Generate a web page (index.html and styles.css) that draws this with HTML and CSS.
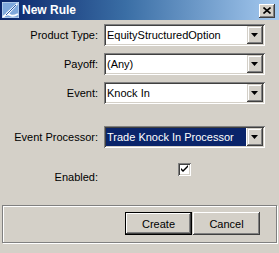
FILE: index.html
```html
<!DOCTYPE html>
<html>
<head lang="en">
    <meta charset="UTF-8">
    <title>New Rule</title>
    <link rel="stylesheet" href="styles.css">
</head>
<body>
<div class="dialog">
    <div class="titlebar">
        <svg class="title-icon" width="17" height="16" viewBox="0 0 17 16">
            <rect x="0" y="0" width="17" height="16" fill="#7fa8dc"/>
            <rect x="0" y="0" width="17" height="16" fill="none" stroke="#dce8f6" stroke-width="1"/>
            <polygon points="15,1 16,2 6,13 3,14 4,11" fill="#ffffff"/>
            <path d="M1 15 Q5 11 8 13 T16 12" fill="none" stroke="#ffffff" stroke-width="2"/>
            <line x1="4" y1="13" x2="14" y2="3" stroke="#2a5aa8" stroke-width="1"/>
        </svg>
        <span class="title-text">New Rule</span>
        <span class="close-btn">
            <svg width="8" height="7" viewBox="0 0 8 7">
                <path d="M0.5 0.5 L7.5 6.5 M7.5 0.5 L0.5 6.5" stroke="#000" stroke-width="1.6"/>
            </svg>
        </span>
    </div>
    <div class="form">
        <div class="form-row">
            <label class="form-label">Product Type:</label>
            <div class="combo"><span class="combo-text">EquityStructuredOption</span><span class="combo-arrow"></span></div>
        </div>
        <div class="form-row">
            <label class="form-label">Payoff:</label>
            <div class="combo"><span class="combo-text">(Any)</span><span class="combo-arrow"></span></div>
        </div>
        <div class="form-row">
            <label class="form-label">Event:</label>
            <div class="combo"><span class="combo-text">Knock In</span><span class="combo-arrow"></span></div>
        </div>
        <div class="form-row form-row-gap">
            <label class="form-label">Event Processor:</label>
            <div class="combo"><span class="combo-text combo-selected">Trade Knock In Processor</span><span class="combo-arrow"></span></div>
        </div>
        <div class="form-row form-row-check">
            <label class="form-label">Enabled:</label>
            <div class="check-cell">
                <span class="checkbox">
                    <svg width="9" height="9" viewBox="0 0 9 9">
                        <path d="M1 3 L1 5 L3 7 L8 2 L8 0 L3 5 Z" fill="#000"/>
                    </svg>
                </span>
            </div>
        </div>
    </div>
    <div class="button-panel">
        <button class="btn btn-default">Create</button>
        <button class="btn">Cancel</button>
    </div>
</div>
</body>
</html>
```

FILE: styles.css
```css
body {
    margin: 0px;
    padding: 0px;
    font-family: "Liberation Sans", Arial, sans-serif;
    font-size: 11px;
    color: #000000;
}
.dialog {
    width: 279px;
    height: 253px;
    background: #d4d0c8;
    overflow: hidden;
}
.titlebar {
    height: 20px;
    display: flex;
    align-items: center;
    padding-left: 2px;
    background: linear-gradient(to right, #0a246a 0%, #3a6ea5 45%, #a6caf0 100%);
}
.title-icon {
    display: block;
    margin-right: 3px;
}
.title-text {
    flex: 1;
    color: #ffffff;
    font-weight: bold;
    font-size: 12px;
}
.close-btn {
    width: 16px;
    height: 14px;
    margin-right: 4px;
    margin-top: 1px;
    display: flex;
    align-items: center;
    justify-content: center;
    background: #d4d0c8;
    box-shadow: inset -1px -1px #404040, inset 1px 1px #ffffff, inset -2px -2px #808080;
}
.close-btn svg {
    display: block;
}
.form {
    padding-top: 4px;
}
.form-row {
    display: flex;
    align-items: center;
    height: 22px;
    margin-bottom: 7px;
}
.form-row-gap {
    margin-top: 22px;
    margin-bottom: 15px;
}
.form-row-check {
    height: 26px;
    align-items: flex-end;
}
.form-label {
    width: 98px;
    margin-right: 6px;
    text-align: right;
    white-space: nowrap;
}
.form-row-check .form-label {
    padding-bottom: 6px;
}
.combo {
    width: 161px;
    height: 22px;
    box-sizing: border-box;
    padding: 2px;
    display: flex;
    background: #ffffff;
    box-shadow: inset 1px 1px #808080, inset -1px -1px #ffffff, inset 2px 2px #404040, inset -2px -2px #d4d0c8;
}
.combo-text {
    flex: 1;
    line-height: 18px;
    padding-left: 1px;
    white-space: nowrap;
    overflow: hidden;
}
.combo-selected {
    background: #0a246a;
    color: #ffffff;
    margin-right: 1px;
}
.combo-arrow {
    width: 16px;
    height: 18px;
    position: relative;
    background: #d4d0c8;
    box-shadow: inset -1px -1px #404040, inset 1px 1px #d4d0c8, inset -2px -2px #808080, inset 2px 2px #ffffff;
}
.combo-arrow:after {
    content: "";
    position: absolute;
    left: 4px;
    top: 7px;
    width: 7px;
    height: 4px;
    background: #000000;
    clip-path: polygon(0 0, 100% 0, 50% 100%);
}
.check-cell {
    width: 161px;
    height: 26px;
    display: flex;
    justify-content: center;
    align-items: flex-start;
}
.checkbox {
    width: 13px;
    height: 13px;
    display: flex;
    align-items: center;
    justify-content: center;
    background: #ffffff;
    box-shadow: inset 1px 1px #808080, inset -1px -1px #ffffff, inset 2px 2px #404040, inset -2px -2px #d4d0c8;
}
.checkbox svg {
    display: block;
}
.button-panel {
    margin: 16px 2px 0px 2px;
    height: 38px;
    border: 1px solid #808080;
    box-shadow: inset 1px 1px #ffffff, 1px 1px #ffffff;
    display: flex;
    justify-content: flex-end;
    align-items: flex-start;
    padding: 6px 16px 0px 0px;
    box-sizing: border-box;
    gap: 1px;
}
.btn {
    width: 67px;
    height: 23px;
    border: none;
    padding: 0px;
    font-family: "Liberation Sans", Arial, sans-serif;
    font-size: 11px;
    color: #000000;
    background: #d4d0c8;
    box-shadow: inset -1px -1px #404040, inset 1px 1px #ffffff, inset -2px -2px #808080, inset 2px 2px #d4d0c8;
}
.btn-default {
    box-shadow: inset 0 0 0 1px #000000, inset -2px -2px #404040, inset 2px 2px #ffffff, inset -3px -3px #808080;
}
```
